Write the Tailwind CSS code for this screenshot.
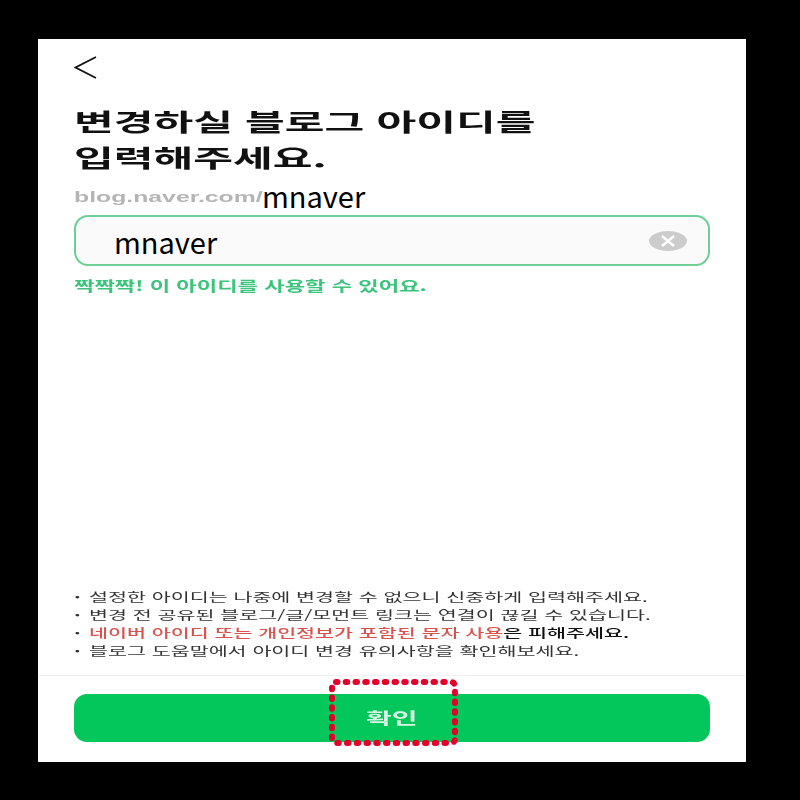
<!DOCTYPE html>
<html lang="ko">
<head>
<meta charset="utf-8">
<title>블로그 아이디 변경</title>
<script src="https://cdn.jsdelivr.net/npm/@tailwindcss/browser@4"></script>
</head>
<body class="bg-black font-['Liberation_Sans','Noto_Sans_CJK_KR',sans-serif]">
<div class="w-[800px] h-[800px] bg-black pt-[39px] pl-[38px] overflow-hidden">
    <!-- 화면 -->
    <div class="relative w-[708px] h-[723px] bg-white flex flex-col">
        <div class="flex-1 px-[36px] flex flex-col">
            <!-- 뒤로가기 -->
            <svg class="w-[24px] h-[24px] mt-[16px] shrink-0" viewBox="0 0 24 24" fill="none" stroke="#111" stroke-width="1.8">
                <path d="M22 2L1.5 12.5 22 23" />
            </svg>
            <h1 class="mt-[24px] w-[260px] text-[24px] leading-[36px] font-bold text-[#111] font-['Noto_Sans_CJK_KR',sans-serif] origin-left scale-x-[1.8] whitespace-nowrap blur-[0.4px]">변경하실 블로그 아이디를<br>입력해주세요.</h1>
            <div class="mt-[7px] h-[30px] flex items-center whitespace-nowrap">
                <span class="w-[188px] shrink-0 text-[14px] font-['Liberation_Sans',sans-serif] text-[#b5b5b5] font-bold blur-[0.4px]"><span class="inline-block origin-left scale-x-[1.77]">blog.naver.com/</span></span>
                <span class="text-[29px] leading-[30px] -mt-[4px] text-black font-['Noto_Sans_CJK_KR',sans-serif]">mnaver</span>
            </div>
            <!-- 입력칸 -->
            <div class="mt-[3px] h-[51px] border-2 border-[#6fcf97] rounded-[14px] bg-[#fafafa] flex items-center justify-between pl-[38px] pr-[21px]">
                <span class="text-[29px] leading-[40px] text-black font-['Noto_Sans_CJK_KR',sans-serif]">mnaver</span>
                <div class="w-[38px] h-[20px] rounded-[50%] bg-[#cccccc] flex items-center justify-center">
                    <svg class="w-[16px] h-[12px]" viewBox="0 0 16 12" fill="none" stroke="#fff" stroke-width="2.4">
                        <path d="M2 1l12 10M14 1L2 11" />
                    </svg>
                </div>
            </div>
            <p class="mt-[8px] w-[225px] text-[14px] leading-[22px] font-bold text-[#3cc47c] font-['Noto_Sans_CJK_KR',sans-serif] origin-left scale-x-[1.585] whitespace-nowrap blur-[0.3px]">짝짝짝! 이 아이디를 사용할 수 있어요.</p>
            <!-- 안내 -->
            <ul class="mt-auto mb-[15px] w-[345px] text-[12.4px] leading-[18px] text-[#333] font-['Noto_Sans_CJK_KR',sans-serif] origin-left scale-x-[1.665] whitespace-nowrap blur-[0.3px]">
                <li class="flex"><span class="w-[9px] shrink-0 font-bold">·</span><span>설정한 아이디는 나중에 변경할 수 없으니 신중하게 입력해주세요.</span></li>
                <li class="flex"><span class="w-[9px] shrink-0 font-bold">·</span><span>변경 전 공유된 블로그/글/모먼트 링크는 연결이 끊길 수 있습니다.</span></li>
                <li class="flex"><span class="w-[9px] shrink-0 font-bold">·</span><span><span class="text-[#d9534f] font-medium">네이버 아이디 또는 개인정보가 포함된 문자 사용</span><span class="text-[#111] font-medium">은 피해주세요.</span></span></li>
                <li class="flex"><span class="w-[9px] shrink-0 font-bold">·</span><span>블로그 도움말에서 아이디 변경 유의사항을 확인해보세요.</span></li>
            </ul>
        </div>
        <!-- 하단 버튼 -->
        <div class="h-[87px] shrink-0 border-t border-[#f0f0f0] px-[36px] pt-[18px]">
            <button class="w-full h-[48px] rounded-[13px] bg-[#03c75a] text-[#d8f5e4] text-[16px] font-bold font-['Noto_Sans_CJK_KR',sans-serif]"><span class="inline-block scale-x-[1.75] -translate-y-[1px] blur-[0.3px]">확인</span></button>
        </div>
        <!-- 강조 표시 -->
        <svg class="absolute left-[291px] top-[640px] w-[129px] h-[67px]" viewBox="0 0 129 67" fill="none" stroke="#e4002b" stroke-width="6" stroke-linecap="round">
            <rect x="3" y="3" width="123" height="61" rx="4" stroke-dasharray="1.5 8.25" />
        </svg>
    </div>
</div>
</body>
</html>
